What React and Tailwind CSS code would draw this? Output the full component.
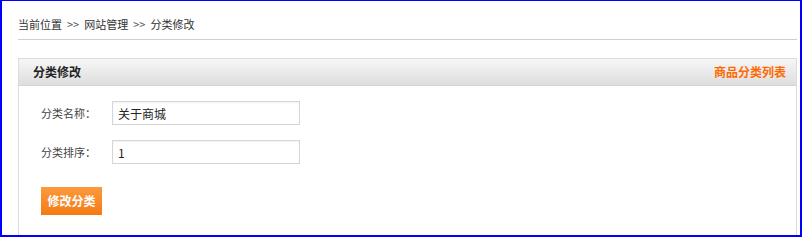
import React from 'react';

const FONT = { fontFamily: '"Noto Sans CJK SC", "Liberation Sans", sans-serif' };

function Field({ label, value }) {
  return (
    <div className="flex items-center h-[24px]">
      <span className="w-[71px] text-[11px] text-[#444]">{label}</span>
      <input
        defaultValue={value}
        className="w-[188px] h-[24px] border border-[#d6d6d6] bg-white px-[5px] text-[12px] text-[#222] shadow-[inset_0_1px_2px_rgba(0,0,0,0.06)] outline-none"
      />
    </div>
  );
}

export default function App() {
  return (
    <div
      className="w-[802px] h-[237px] bg-white border-t border-l-2 border-r-2 border-b-2 border-[#0000ff] pl-[16px] pr-[3px] overflow-hidden"
      style={FONT}
    >
      <div className="h-[39px] pt-[15px] border-b border-[#cfcfcf] text-[11px] leading-[16px] text-[#333] flex">
        <span>当前位置</span>
        <span className="mx-[5px] text-[#555]">&gt;&gt;</span>
        <span>网站管理</span>
        <span className="mx-[5px] text-[#555]">&gt;&gt;</span>
        <span>分类修改</span>
      </div>

      <div className="mt-[18px] border border-[#dcdcdc] h-[180px]">
        <div className="h-[27px] flex items-center justify-between bg-gradient-to-b from-[#f6f6f6] to-[#dedede] border-b border-[#d4d4d4] pl-[14px] pr-[10px]">
          <span className="text-[12px] font-bold text-[#222]">分类修改</span>
          <a className="text-[12px] font-bold text-[#ff6a00] cursor-pointer">商品分类列表</a>
        </div>

        <div className="pl-[22px] pt-[15px] flex flex-col gap-[15px]">
          <Field label="分类名称：" value="关于商城" />
          <Field label="分类排序：" value="1" />
          <div className="pt-[8px]">
            <button className="w-[61px] h-[28px] bg-gradient-to-b from-[#fb9a3c] to-[#f47a10] text-white text-[12px] font-bold">
              修改分类
            </button>
          </div>
        </div>
      </div>
    </div>
  );
}
